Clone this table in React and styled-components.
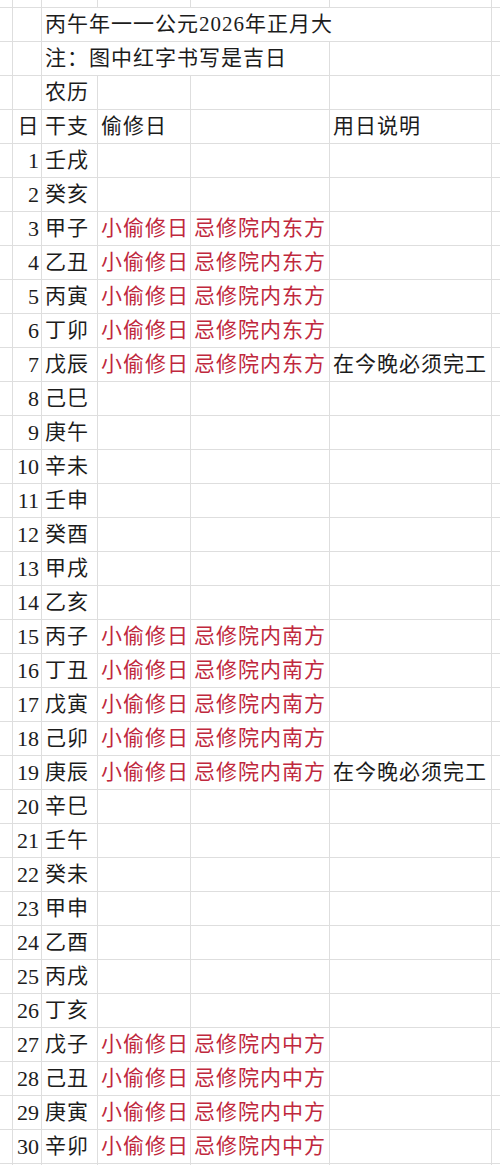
import styled, { createGlobalStyle } from 'styled-components'

const GlobalStyle = createGlobalStyle`
  html, body {
    margin: 0;
    padding: 0;
    background: #ffffff;
  }
  body {
    font-family: "Liberation Serif", "Noto Sans CJK SC", serif;
    color: #1c1c1c;
  }
`

const Sheet = styled.div`
  display: grid;
  grid-template-columns: 13px 29px 56px 93px 139px 162px 1fr;
  grid-template-rows: 8px;
  grid-auto-rows: 34px;
  width: 500px;
  height: 1165px;
  overflow: hidden;
  background: #fff;
`

const Cell = styled.div`
  box-sizing: border-box;
  border-right: ${(p) => (p.$noRight ? '0' : '1px solid #dedede')};
  border-bottom: 1px solid #dedede;
  display: flex;
  align-items: center;
  justify-content: ${(p) =>
    p.$align === 'right' ? 'flex-end' : p.$align === 'center' ? 'center' : 'flex-start'};
  padding: ${(p) => (p.$align === 'right' ? '0 2px 0 0' : '0 0 0 3px')};
  grid-column: ${(p) => (p.$span ? `span ${p.$span}` : 'auto')};
  white-space: nowrap;
  overflow: visible;
  font-size: 21px;
  letter-spacing: 1px;
  line-height: 1;
  color: ${(p) => (p.$red ? '#c0283d' : '#1c1c1c')};
`

const DayNum = styled(Cell)`
  font-size: 22px;
  letter-spacing: 0;
`

const days = [
  '壬戌', '癸亥', '甲子', '乙丑', '丙寅', '丁卯', '戊辰', '己巳', '庚午', '辛未',
  '壬申', '癸酉', '甲戌', '乙亥', '丙子', '丁丑', '戊寅', '己卯', '庚辰', '辛巳',
  '壬午', '癸未', '甲申', '乙酉', '丙戌', '丁亥', '戊子', '己丑', '庚寅', '辛卯',
]

const direction = (d) => {
  if (d >= 3 && d <= 7) return '东方'
  if (d >= 15 && d <= 19) return '南方'
  if (d >= 27) return '中方'
  return null
}

const notes = { 7: '在今晚必须完工', 19: '在今晚必须完工' }

const EmptyRow = () => (
  <>
    <Cell />
    <Cell />
    <Cell />
    <Cell />
    <Cell />
    <Cell />
    <Cell $noRight />
  </>
)

export default function App() {
  return (
    <>
      <GlobalStyle />
      <Sheet>
        <EmptyRow />

        <Cell />
        <Cell />
        <Cell $span={4}>丙午年一一公元2026年正月大</Cell>
        <Cell $noRight />

        <Cell />
        <Cell />
        <Cell $span={3}>注：图中红字书写是吉日</Cell>
        <Cell />
        <Cell $noRight />

        <Cell />
        <Cell />
        <Cell>农历</Cell>
        <Cell />
        <Cell />
        <Cell />
        <Cell $noRight />

        <Cell />
        <Cell $align="center">日</Cell>
        <Cell>干支</Cell>
        <Cell>偷修日</Cell>
        <Cell />
        <Cell>用日说明</Cell>
        <Cell $noRight />

        {days.map((gz, i) => {
          const d = i + 1
          const dir = direction(d)
          return (
            <Row key={d} day={d} gz={gz} dir={dir} note={notes[d]} />
          )
        })}

        <EmptyRow />
      </Sheet>
    </>
  )
}

const Row = ({ day, gz, dir, note }) => (
  <>
    <Cell />
    <DayNum $align="right">{day}</DayNum>
    <Cell>{gz}</Cell>
    <Cell $red>{dir ? '小偷修日' : ''}</Cell>
    <Cell $red>{dir ? `忌修院内${dir}` : ''}</Cell>
    <Cell>{note || ''}</Cell>
    <Cell $noRight />
  </>
)
